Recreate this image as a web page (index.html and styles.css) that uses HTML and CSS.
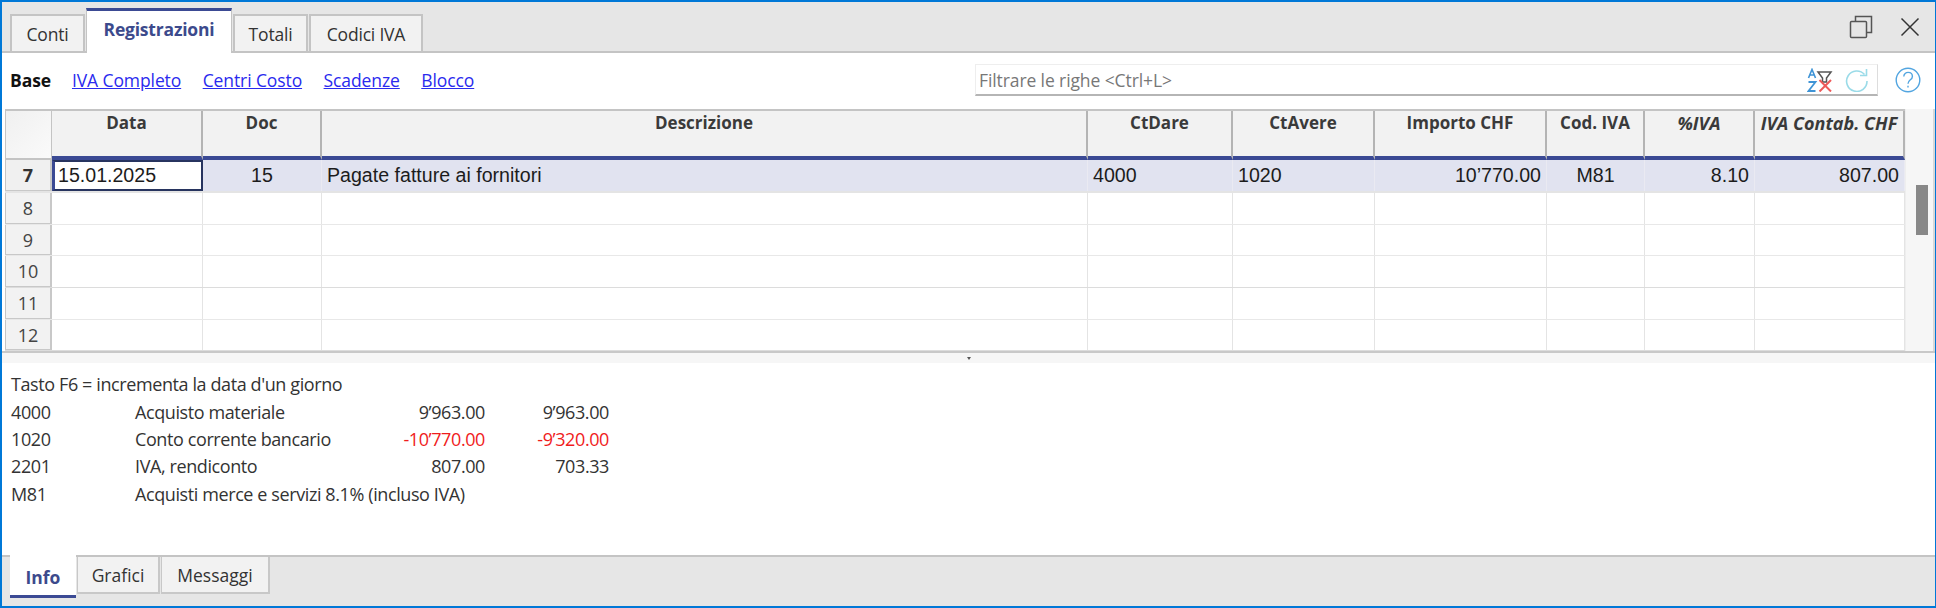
FILE: index.html
```html
<!DOCTYPE html>
<html lang="it">
<head>
  <meta charset="UTF-8">
  <title>Registrazioni</title>
  <link rel="stylesheet" href="styles.css">
</head>
<body>
  <div class="window">
    <div class="top-tabs">
      <div class="tab">Conti</div>
      <div class="tab tab-active">Registrazioni</div>
      <div class="tab">Totali</div>
      <div class="tab">Codici IVA</div>
      <div class="window-btns">
        <svg width="24" height="24" viewBox="0 0 24 24" fill="none" stroke="#555" stroke-width="1.5">
          <rect x="1.5" y="6.5" width="16" height="16" rx="1"/>
          <path d="M6.5 6V1.5H22.5V17.5H18"/>
        </svg>
        <svg width="20" height="20" viewBox="0 0 20 20" fill="none" stroke="#333" stroke-width="1.5">
          <path d="M1.5 1.5L18.5 18.5M18.5 1.5L1.5 18.5"/>
        </svg>
      </div>
    </div>

    <div class="toolbar">
      <span class="view-current">Base</span>
      <a class="view-link">IVA Completo</a>
      <a class="view-link">Centri Costo</a>
      <a class="view-link">Scadenze</a>
      <a class="view-link">Blocco</a>
      <div class="filter">
        <span class="filter-text">Filtrare le righe &lt;Ctrl+L&gt;</span>
        <svg class="filter-icon" width="26" height="24" viewBox="0 0 26 24" fill="none">
          <path d="M1.5 10L5 1.5L8.5 10M2.8 7H7.2" stroke="#3f94d6" stroke-width="1.6"/>
          <path d="M1.5 14H8.5L1.5 23H8.5" stroke="#3f94d6" stroke-width="1.8"/>
          <path d="M11 4H24L19.5 10V14H15.5V10Z" stroke="#555" stroke-width="1.5"/>
          <path d="M12.5 12L24 23.5M24 12L12.5 23.5" stroke="#ee5a5a" stroke-width="2"/>
        </svg>
        <svg class="refresh-icon" width="24" height="24" viewBox="0 0 24 24" fill="none" stroke="#9adbe8" stroke-width="1.6">
          <path d="M19.5 6.5A10.2 10.2 0 1 0 22 13"/>
          <path d="M21.5 1V7.5H15"/>
        </svg>
      </div>
      <svg class="help-icon" width="26" height="26" viewBox="0 0 26 26" fill="none" stroke="#52a5e0" stroke-width="1.4">
        <circle cx="13" cy="13" r="11.8"/>
        <path d="M8.8 9.6C8.8 3.9 17.4 4.2 17.4 9.4C17.4 12.9 13 12.8 13 16.8"/>
        <path d="M13 18.8V20.6"/>
      </svg>
    </div>

    <div class="grid-wrap">
      <div class="grid">
        <div class="row row-head">
          <div class="corner"></div>
          <div class="hcell">Data</div>
          <div class="hcell">Doc</div>
          <div class="hcell">Descrizione</div>
          <div class="hcell">CtDare</div>
          <div class="hcell">CtAvere</div>
          <div class="hcell">Importo CHF</div>
          <div class="hcell">Cod. IVA</div>
          <div class="hcell hcell-italic">%IVA</div>
          <div class="hcell hcell-italic">IVA Contab. CHF</div>
        </div>
        <div class="row row-selected">
          <div class="rownum rownum-current">7</div>
          <div class="cell cell-focus">15.01.2025</div>
          <div class="cell center">15</div>
          <div class="cell">Pagate fatture ai fornitori</div>
          <div class="cell">4000</div>
          <div class="cell">1020</div>
          <div class="cell right">10’770.00</div>
          <div class="cell center">M81</div>
          <div class="cell right">8.10</div>
          <div class="cell right">807.00</div>
        </div>
        <div class="row"><div class="rownum">8</div><div class="cell"></div><div class="cell"></div><div class="cell"></div><div class="cell"></div><div class="cell"></div><div class="cell"></div><div class="cell"></div><div class="cell"></div><div class="cell"></div></div>
        <div class="row"><div class="rownum">9</div><div class="cell"></div><div class="cell"></div><div class="cell"></div><div class="cell"></div><div class="cell"></div><div class="cell"></div><div class="cell"></div><div class="cell"></div><div class="cell"></div></div>
        <div class="row row-strong"><div class="rownum">10</div><div class="cell"></div><div class="cell"></div><div class="cell"></div><div class="cell"></div><div class="cell"></div><div class="cell"></div><div class="cell"></div><div class="cell"></div><div class="cell"></div></div>
        <div class="row"><div class="rownum">11</div><div class="cell"></div><div class="cell"></div><div class="cell"></div><div class="cell"></div><div class="cell"></div><div class="cell"></div><div class="cell"></div><div class="cell"></div><div class="cell"></div></div>
        <div class="row row-strong"><div class="rownum">12</div><div class="cell"></div><div class="cell"></div><div class="cell"></div><div class="cell"></div><div class="cell"></div><div class="cell"></div><div class="cell"></div><div class="cell"></div><div class="cell"></div></div>
      </div>
      <div class="scrollbar"><div class="scroll-thumb"></div></div>
    </div>

    <div class="splitter"><span class="splitter-arrow"></span></div>

    <div class="info">
      <div class="info-hint">Tasto F6 = incrementa la data d'un giorno</div>
      <div class="info-row"><span>4000</span><span>Acquisto materiale</span><span class="amount">9’963.00</span><span class="amount">9’963.00</span></div>
      <div class="info-row"><span>1020</span><span>Conto corrente bancario</span><span class="amount negative">-10’770.00</span><span class="amount negative">-9’320.00</span></div>
      <div class="info-row"><span>2201</span><span>IVA, rendiconto</span><span class="amount">807.00</span><span class="amount">703.33</span></div>
      <div class="info-row"><span>M81</span><span class="info-wide">Acquisti merce e servizi 8.1% (incluso IVA)</span></div>
    </div>

    <div class="bottom-tabs">
      <div class="btab btab-active">Info</div>
      <div class="btab">Grafici</div>
      <div class="btab">Messaggi</div>
    </div>
  </div>
</body>
</html>
```

FILE: styles.css
```css
* {
  box-sizing: border-box;
}

html, body {
  margin: 0;
  padding: 0;
}

body {
  width: 1936px;
  height: 608px;
  overflow: hidden;
  background: #fff;
  font-family: "Open Sans", sans-serif;
}

.window {
  width: 1936px;
  height: 608px;
  border: 2px solid #0078d7;
  border-right-width: 1px;
  display: flex;
  flex-direction: column;
}

/* top tabs */
.top-tabs {
  height: 51px;
  flex: none;
  display: grid;
  grid-template-columns: 75px 146px 75px 114px 1fr;
  column-gap: 1px;
  align-items: end;
  padding-left: 8px;
  background: #e6e6e6;
  border-bottom: 2px solid #c4c4c4;
}

.tab {
  height: 39px;
  margin-bottom: -2px;
  display: flex;
  align-items: center;
  justify-content: center;
  font-size: 17.5px;
  letter-spacing: -0.2px;
  color: #333;
  background: #f2f2f2;
  border: 2px solid #c4c4c4;
}

.tab-active {
  height: 45px;
  padding-bottom: 6px;
  font-weight: 700;
  color: #3c4a8c;
  background: #fff;
  border: none;
  border-top: 3px solid #3b4a94;
  border-left: 1px solid #c4c4c4;
  border-right: 1px solid #c4c4c4;
}

.window-btns {
  display: flex;
  justify-content: flex-end;
  align-items: center;
  gap: 27px;
  padding-right: 15px;
  height: 100%;
}

/* toolbar under the tabs */
.toolbar {
  height: 56px;
  flex: none;
  display: flex;
  align-items: center;
  padding: 0 14px 2px 8px;
  font-size: 17.5px;
  letter-spacing: -0.1px;
}

.view-current {
  font-weight: 700;
  color: #111;
  margin-right: 21px;
}

.view-link {
  color: #2a2aee;
  text-decoration: underline;
  margin-right: 21.5px;
}

.filter {
  margin-left: auto;
  width: 903px;
  height: 32px;
  margin-right: 17px;
  display: flex;
  align-items: center;
  padding: 0 5px 0 3px;
  border: 1px solid #eee;
  border-right-color: #ddd;
  border-bottom: 2px solid #b5b5b5;
  color: #777;
}

.filter-text {
  flex: 1;
}

.refresh-icon {
  margin-left: 12px;
  margin-right: 3px;
}

/* grid */
.grid-wrap {
  height: 244px;
  flex: none;
  display: flex;
  padding-left: 3px;
  border-bottom: 2px solid #c8c8c8;
}

.grid {
  width: 1900px;
  flex: none;
}

.row {
  display: grid;
  grid-template-columns: 47px 151px 119px 766px 145px 142px 172px 98px 110px 150px;
  height: 31.7px;
  border-bottom: 1px solid #e8e8e8;
}

.row-strong {
  border-bottom-color: #dcdcdc;
}

.row-head {
  height: 51px;
  border-top: 2px solid #c4c4c4;
  border-bottom: none;
}

.corner {
  background: linear-gradient(135deg, #f0f0f0, #fafafa);
  border-left: 1px solid #c4c4c4;
  border-right: 1px solid #c4c4c4;
  border-bottom: 2px solid #c4c4c4;
}

.hcell {
  text-align: center;
  font-size: 17px;
  font-weight: 700;
  color: #3a3a3a;
  background: #f2f2f2;
  border-right: 2px solid #b4b4b4;
  border-bottom: 4px solid #3b4a94;
  white-space: nowrap;
  overflow: hidden;
}

.hcell-italic {
  font-style: italic;
  font-size: 18px;
}

.rownum {
  display: flex;
  align-items: center;
  justify-content: center;
  font-size: 18px;
  color: #444;
  background: #f2f2f2;
  border-left: 1px solid #c4c4c4;
  border-right: 2px solid #c8c8c8;
  border-bottom: 1px solid #c8c8c8;
}

.rownum-current {
  font-weight: 700;
  color: #333;
  background: #f0f0f0;
}

.cell {
  display: flex;
  align-items: center;
  padding: 0 5px;
  font-family: "Liberation Sans", sans-serif;
  font-size: 19.6px;
  color: #1c1c1c;
  border-right: 1px solid #e4e4e4;
  white-space: nowrap;
}

.center {
  justify-content: center;
}

.right {
  justify-content: flex-end;
}

.row-selected {
  height: 33px;
  border-bottom: 2px solid #e4e4e4;
}

.row-selected .cell {
  background: #e1e3f0;
  border-right-color: #eaeaf2;
}

.row-selected .cell-focus {
  background: #fff;
  border: 2px solid #27345f;
  border-left: 3px solid #3b4a94;
  padding-left: 3px;
}

.scrollbar {
  flex: 1;
  background: #f6f6f6;
  position: relative;
  border-left: 1px solid #eee;
  border-right: 2px solid #d8d8d8;
}

.scroll-thumb {
  position: absolute;
  left: 10px;
  top: 76px;
  width: 12px;
  height: 50px;
  background: #888;
}

/* splitter */
.splitter {
  height: 10px;
  flex: none;
  display: flex;
  align-items: center;
  justify-content: center;
  background: #f6f6f6;
}

.splitter-arrow {
  width: 0;
  height: 0;
  border-left: 2.5px solid transparent;
  border-right: 2.5px solid transparent;
  border-top: 3px solid #555;
}

/* info panel */
.info {
  flex: 1;
  padding: 9px 0 0 9px;
  font-size: 18px;
  letter-spacing: -0.4px;
  color: #333;
}

.info-hint {
  height: 27px;
  line-height: 24px;
}

.info-row {
  display: grid;
  grid-template-columns: 124px 220px 130px 124px;
  height: 27.2px;
  line-height: 27px;
  white-space: nowrap;
}

.amount {
  text-align: right;
}

.negative {
  color: #f01c1c;
}

.info-wide {
  grid-column: 2 / 5;
}

/* bottom tabs */
.bottom-tabs {
  height: 51px;
  flex: none;
  display: grid;
  grid-template-columns: 66px 83px 109px;
  column-gap: 1px;
  justify-content: start;
  align-items: start;
  padding-left: 8px;
  background: #e6e6e6;
  border-top: 2px solid #c4c4c4;
  font-size: 17.5px;
  color: #333;
}

.btab {
  height: 37px;
  display: flex;
  align-items: center;
  justify-content: center;
  background: #f2f2f2;
  border: 1px solid #c8c8c8;
  border-top: none;
  border-width: 0 2px 2px 1px;
}

.btab-active {
  height: 43px;
  margin-top: -2px;
  padding-top: 3px;
  font-weight: 700;
  color: #3c4a8c;
  background: #fff;
  border: none;
  border-bottom: 3px solid #3b4a94;
}
```
